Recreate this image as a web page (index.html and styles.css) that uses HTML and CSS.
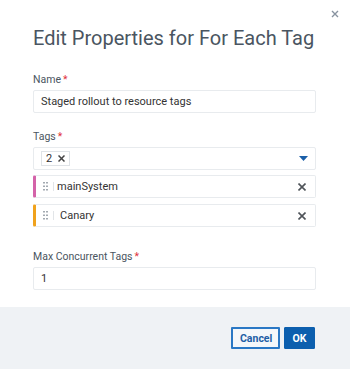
FILE: index.html
```html
<!DOCTYPE html>
<html lang="en">

<head>
	<meta charset="UTF-8">
	<meta name="viewport" content="width=device-width, initial-scale=1.0">
	<title>Edit Properties</title>
	<link rel="stylesheet" href="styles.css">
</head>

<body>
	<div class="dialog">
		<div class="dialog-body">
			<svg class="close" width="8" height="8" viewBox="0 0 8 8"><path d="M1 1l6 6M7 1L1 7" stroke="#8893a0" stroke-width="1.4"/></svg>
			<h1>Edit Properties for For Each Tag</h1>

			<div class="field">
				<label>Name<span class="req">*</span></label>
				<div class="input">Staged rollout to resource tags</div>
			</div>

			<div class="field tags">
				<label>Tags<span class="req">*</span></label>
				<div class="input select">
					<span class="chip">2 <svg width="7" height="7" viewBox="0 0 7 7"><path d="M0.5 0.5l6 6M6.5 0.5l-6 6" stroke="#444" stroke-width="1.5"/></svg></span>
					<svg class="caret" width="9" height="5" viewBox="0 0 9 5"><path d="M0 0h9L4.5 5z" fill="#1b5fa8"/></svg>
				</div>
				<div class="tag-row pink">
					<svg class="grip" width="5" height="9" viewBox="0 0 5 9"><g fill="#a3aab1"><rect x="0" y="0" width="2" height="1.5"/><rect x="3" y="0" width="2" height="1.5"/><rect x="0" y="3.5" width="2" height="1.5"/><rect x="3" y="3.5" width="2" height="1.5"/><rect x="0" y="7" width="2" height="1.5"/><rect x="3" y="7" width="2" height="1.5"/></g></svg>
					<span class="sep"></span>
					<span class="tag-name">mainSystem</span>
					<svg width="8" height="8" viewBox="0 0 8 8"><path d="M0.5 0.5l7 7M7.5 0.5l-7 7" stroke="#4f5459" stroke-width="1.6"/></svg>
				</div>
				<div class="tag-row orange">
					<svg class="grip" width="5" height="9" viewBox="0 0 5 9"><g fill="#a3aab1"><rect x="0" y="0" width="2" height="1.5"/><rect x="3" y="0" width="2" height="1.5"/><rect x="0" y="3.5" width="2" height="1.5"/><rect x="3" y="3.5" width="2" height="1.5"/><rect x="0" y="7" width="2" height="1.5"/><rect x="3" y="7" width="2" height="1.5"/></g></svg>
					<span class="sep"></span>
					<span class="tag-name canary">Canary</span>
					<svg width="8" height="8" viewBox="0 0 8 8"><path d="M0.5 0.5l7 7M7.5 0.5l-7 7" stroke="#4f5459" stroke-width="1.6"/></svg>
				</div>
			</div>

			<div class="field last">
				<label>Max Concurrent Tags<span class="req">*</span></label>
				<div class="input">1</div>
			</div>
		</div>
		<div class="dialog-footer">
			<button class="btn secondary">Cancel</button>
			<button class="btn primary">OK</button>
		</div>
	</div>
</body>

</html>
```

FILE: styles.css
```css
body {
	margin: 0;
	font-family: Roboto, "Noto Sans", sans-serif;
	background-color: #fff;
	color: #333;
}

.dialog {
	width: 350px;
	height: 369px;
	display: flex;
	flex-direction: column;
}

.dialog-body {
	position: relative;
	padding: 24px 34px 17px 33px;
	flex: 1;
}

.close {
	position: absolute;
	right: 11px;
	top: 10px;
}

h1 {
	margin: 0 0 21px;
	font-size: 20px;
	font-weight: 400;
	color: #4a5561;
	line-height: 28px;
}

.field {
	margin-bottom: 17px;
}

.field.tags {
	margin-bottom: 23px;
}

.field.last {
	margin-bottom: 0;
}

label {
	display: block;
	font-size: 10.5px;
	color: #4a5561;
	line-height: 13px;
	margin-bottom: 4px;
}

.req {
	color: #e0303a;
	margin-left: 2px;
}

.input {
	height: 21px;
	border: 1px solid #e8ebee;
	border-radius: 2px;
	padding: 0 7px;
	display: flex;
	align-items: center;
	font-size: 11px;
	color: #333;
}

.select {
	justify-content: space-between;
	padding-right: 7px;
}

.chip {
	border: 1px solid #dfe3e7;
	font-size: 11px;
	padding: 0 4px;
	height: 13px;
	line-height: 13px;
	display: flex;
	align-items: center;
	gap: 6px;
	color: #333;
}

.tag-row {
	margin-top: 5px;
	height: 21px;
	border: 1px solid #e8ebee;
	border-left: 3px solid #d463a9;
	border-radius: 2px;
	display: flex;
	align-items: center;
	font-size: 11px;
	color: #333;
	padding-right: 9px;
}

.tag-row.orange {
	margin-top: 6px;
	border-left-color: #f0a21c;
}

.grip {
	margin-left: 7px;
}

.sep {
	width: 1px;
	height: 9px;
	background-color: #e2e5e8;
	margin: 0 3px 0 5px;
}

.tag-name {
	flex: 1;
}

.tag-name.canary {
	padding-left: 3px;
}

.dialog-footer {
	height: 62px;
	background-color: #eff2f5;
	display: flex;
	justify-content: flex-end;
	align-items: center;
	gap: 4px;
	padding-right: 35px;
}

.btn {
	font-family: Roboto, sans-serif;
	font-size: 10.5px;
	font-weight: 700;
	height: 22px;
	padding: 0 7px;
	border-radius: 1px;
	cursor: pointer;
}

.btn.secondary {
	background-color: #f4f7fa;
	border: 2px solid #2a78c5;
	color: #1f5fa6;
	width: 49px;
}

.btn.primary {
	background-color: #0c5fae;
	border: 1px solid #0c5fae;
	color: #fff;
	width: 31px;
}
```
